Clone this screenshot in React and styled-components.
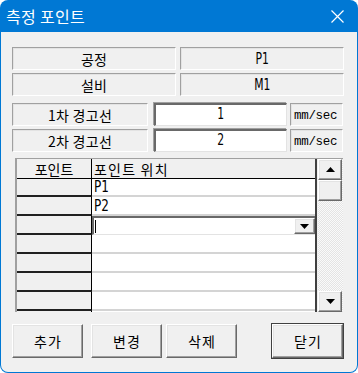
import React from "react";
import styled, { createGlobalStyle, css } from "styled-components";

const Global = createGlobalStyle`
  html, body { margin: 0; padding: 0; background: #ffffff; }
  body { font-family: "Noto Sans CJK KR", "Noto Sans", sans-serif; }
  * { box-sizing: border-box; }
`;

const Window = styled.div`
  width: 358px;
  height: 373px;
  background: #0078d4;
  border-radius: 8px;
  display: flex;
  flex-direction: column;
  overflow: hidden;
`;

const TitleBar = styled.div`
  height: 32px;
  display: flex;
  align-items: center;
  justify-content: space-between;
  padding: 0 14px 0 6px;
  color: #ffffff;
  font-size: 16px;
  letter-spacing: 0.3px;
  line-height: 1;
`;

const Body = styled.div`
  flex: 1;
  margin: 0 1px 1px 1px;
  background: #f0f0f0;
  border-radius: 0 0 7px 7px;
  padding: 15px 12px 0 11px;
  display: flex;
  flex-direction: column;
  font-size: 14px;
  color: #000;
`;

const InfoGrid = styled.div`
  display: grid;
  grid-template-columns: 164px 164px;
  column-gap: 4px;
  row-gap: 3px;
`;

const staticEdge = css`
  border-top: 1px solid #a0a0a0;
  border-left: 1px solid #a0a0a0;
  border-right: 1px solid #ffffff;
  border-bottom: 1px solid #ffffff;
  box-shadow: inset 1px 1px 0 #e3e3e3;
`;

const Label = styled.div`
  ${staticEdge};
  height: 23px;
  display: flex;
  align-items: center;
  justify-content: center;
  font-size: 14px;
  letter-spacing: ${(p) => (p.$spaced ? "0.3px" : "0")};
  line-height: 1;
  padding-top: 1px;
`;

const LatinText = styled.span`
  display: inline-block;
  font-family: "DejaVu Sans", sans-serif;
  font-size: 15px;
  line-height: 1;
  transform: scaleX(0.72);
`;

const ThresholdGrid = styled.div`
  margin-top: 7px;
  display: grid;
  grid-template-columns: 136px 135px 52px;
  column-gap: 4px;
  row-gap: 3px;
  & > *:nth-child(3n + 2) { margin-left: 2px; }
  & > *:nth-child(3n) { margin-left: -1px; }
`;

const TextInput = styled.div`
  height: 23px;
  background: #ffffff;
  border-top: 2px solid #696969;
  border-left: 2px solid #696969;
  border-right: 1px solid #e3e3e3;
  border-bottom: 1px solid #e3e3e3;
  box-shadow: -1px -1px 0 #a0a0a0;
  display: flex;
  align-items: center;
  justify-content: center;
  padding-bottom: 1px;
`;

const Unit = styled.div`
  ${staticEdge};
  height: 23px;
  display: flex;
  align-items: center;
  padding-left: 3px;
  padding-top: 2px;
  font-family: "Liberation Mono", monospace;
  font-size: 12.5px;
  letter-spacing: -0.3px;
`;

const GridFrame = styled.div`
  margin-top: 6px;
  margin-left: 3px;
  width: 328px;
  height: 154px;
  display: flex;
  border-left: 2px solid #a0a0a0;
  border-top: 1px solid #a0a0a0;
  overflow: hidden;
`;

const Table = styled.div`
  width: 301px;
  display: flex;
  flex-direction: column;
  border-right: 2px solid #404040;
  overflow: hidden;
`;

const HeaderRow = styled.div`
  display: grid;
  grid-template-columns: 75px 1fr;
  height: 20px;
  flex-shrink: 0;
  background: #f0f0f0;
  border-bottom: 1px solid #000;
`;

const HeaderCell = styled.div`
  display: flex;
  align-items: center;
  justify-content: ${(p) => (p.$center ? "center" : "flex-start")};
  padding-left: ${(p) => (p.$center ? "0" : "2px")};
  border-right: ${(p) => (p.$first ? "1px solid #000" : "none")};
  letter-spacing: ${(p) => (p.$center ? "0" : "1.2px")};
  font-size: 14px;
  line-height: 1;
`;

const Row = styled.div`
  display: grid;
  grid-template-columns: 75px 1fr;
  height: ${(p) => p.$h || 19}px;
  flex-shrink: 0;
`;

const RowHead = styled.div`
  background: #f0f0f0;
  border-right: 1px solid #000;
  border-bottom: 2px solid #202020;
`;

const RowCell = styled.div`
  background: #ffffff;
  border-bottom: 2px solid #d4d4d4;
  display: flex;
  align-items: center;
  padding-left: 2px;
  font-family: "DejaVu Sans", sans-serif;
  font-size: 16px;
  line-height: 1;
`;

const CellText = styled.span`
  display: inline-block;
  transform: scaleX(0.75);
  transform-origin: left center;
`;

const EditCell = styled.div`
  background: #ffffff;
  border-top: 2px solid #696969;
  border-left: 2px solid #696969;
  border-bottom: 1px solid #e3e3e3;
  display: flex;
  align-items: center;
  justify-content: space-between;
  padding-left: 1px;
`;

const Caret = styled.div`
  width: 1px;
  height: 13px;
  background: #000;
`;

const raised = css`
  background: #f0f0f0;
  border-top: 1px solid #ffffff;
  border-left: 1px solid #ffffff;
  border-right: 1px solid #696969;
  border-bottom: 1px solid #696969;
  box-shadow: inset -1px -1px 0 #a0a0a0, inset 1px 1px 0 #e3e3e3;
`;

const DropButton = styled.div`
  ${raised};
  width: 21px;
  height: 100%;
  display: flex;
  align-items: center;
  justify-content: center;
`;

const ScrollBar = styled.div`
  width: 25px;
  margin-left: 1px;
  display: flex;
  flex-direction: column;
  background-color: #f4f4f4;
  background-image: repeating-conic-gradient(#fafafa 0% 25%, #e4e4e4 0% 50%);
  background-size: 2px 2px;
`;

const ScrollButton = styled.div`
  ${raised};
  height: ${(p) => p.$h || 21}px;
  width: 24px;
  display: flex;
  align-items: center;
  justify-content: center;
  flex-shrink: 0;
  margin-top: ${(p) => (p.$push ? "auto" : "0")};
`;

const Buttons = styled.div`
  margin-top: 12px;
  display: flex;
`;

const Button = styled.div`
  ${raised};
  width: ${(p) => p.$w || 71}px;
  height: 34px;
  margin-left: ${(p) => p.$ml || 0}px;
  display: flex;
  align-items: center;
  justify-content: center;
  font-size: 14px;
  letter-spacing: 1px;
  padding-left: 1px;
  line-height: 1;
  ${(p) =>
    p.$default &&
    css`
      outline: 1px solid #404040;
      outline-offset: 0;
    `}
`;

const Tri = ({ up }) => (
  <svg width="9" height="5" viewBox="0 0 9 5">
    {up ? <polygon points="4.5,0 9,5 0,5" fill="#000" /> : <polygon points="0,0 9,0 4.5,5" fill="#000" />}
  </svg>
);

const CloseIcon = () => (
  <svg width="13" height="13" viewBox="0 0 13 13">
    <path d="M0.5 0.5 L12.5 12.5 M12.5 0.5 L0.5 12.5" stroke="#fff" strokeWidth="1.2" />
  </svg>
);

export default function App() {
  const emptyRows = [0, 1, 2, 3, 4];
  return (
    <>
      <Global />
      <Window>
        <TitleBar>
          <span>측정 포인트</span>
          <CloseIcon />
        </TitleBar>
        <Body>
          <InfoGrid>
            <Label>공정</Label>
            <Label><LatinText>P1</LatinText></Label>
            <Label>설비</Label>
            <Label><LatinText>M1</LatinText></Label>
          </InfoGrid>
          <ThresholdGrid>
            <Label $spaced>1차 경고선</Label>
            <TextInput><LatinText>1</LatinText></TextInput>
            <Unit>mm/sec</Unit>
            <Label $spaced>2차 경고선</Label>
            <TextInput><LatinText>2</LatinText></TextInput>
            <Unit>mm/sec</Unit>
          </ThresholdGrid>
          <GridFrame>
            <Table>
              <HeaderRow>
                <HeaderCell $center $first>포인트</HeaderCell>
                <HeaderCell>포인트 위치</HeaderCell>
              </HeaderRow>
              <Row $h={18}>
                <RowHead />
                <RowCell><CellText>P1</CellText></RowCell>
              </Row>
              <Row>
                <RowHead />
                <RowCell><CellText>P2</CellText></RowCell>
              </Row>
              <Row>
                <RowHead />
                <EditCell>
                  <Caret />
                  <DropButton><Tri /></DropButton>
                </EditCell>
              </Row>
              {emptyRows.map((i) => (
                <Row key={i}>
                  <RowHead />
                  <RowCell />
                </Row>
              ))}
            </Table>
            <ScrollBar>
              <ScrollButton><Tri up /></ScrollButton>
              <ScrollButton />
              <ScrollButton $push><Tri /></ScrollButton>
            </ScrollBar>
          </GridFrame>
          <Buttons>
            <Button>추가</Button>
            <Button $ml={8}>변경</Button>
            <Button $ml={4}>삭제</Button>
            <Button $ml={35} $default>닫기</Button>
          </Buttons>
        </Body>
      </Window>
    </>
  );
}
